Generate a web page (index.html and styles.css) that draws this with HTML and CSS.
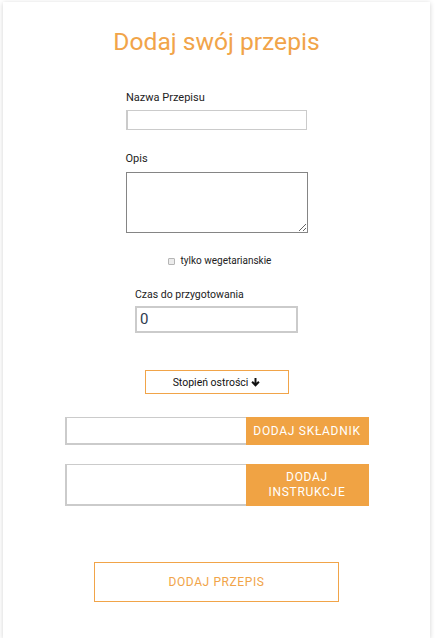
FILE: index.html
```html
<!DOCTYPE html>
<html lang="pl">
<head>
<meta charset="utf-8">
<link rel="stylesheet" href="styles.css">
</head>
<body>
<div class="card">
  <h1 class="title">Dodaj swój przepis</h1>
  <div class="group group-name">
    <label class="label">Nazwa Przepisu</label>
    <input class="text-input name-input" type="text">
  </div>
  <div class="group group-desc">
    <label class="label">Opis</label>
    <textarea class="desc"></textarea>
  </div>
  <label class="veg">
    <input class="check" type="checkbox">
    <span>tylko wegetarianskie</span>
  </label>
  <div class="group group-time">
    <label class="label label-time">Czas do przygotowania</label>
    <input class="num-input" type="text" value="0">
  </div>
  <button class="spicy">Stopień ostrości <svg class="arrow" width="9" height="10" viewBox="0 0 10 10"><path d="M5 0.5V8.5M1.2 4.8 5 8.6 8.8 4.8" stroke="#111" stroke-width="2.2" fill="none"/></svg></button>
  <div class="row row-ing">
    <input class="row-input" type="text">
    <button class="row-btn">DODAJ SKŁADNIK</button>
  </div>
  <div class="row row-ins">
    <input class="row-input" type="text">
    <button class="row-btn">DODAJ<br>INSTRUKCJE</button>
  </div>
  <button class="submit">DODAJ PRZEPIS</button>
</div>
</body>
</html>
```

FILE: styles.css
```css
* { box-sizing: border-box; }
html, body { margin: 0; padding: 0; background: #fff; }
body { font-family: Roboto, "Liberation Sans", sans-serif; }

.card {
  margin: 2px 0 0 3px;
  width: 427px;
  height: 636px;
  background: #fff;
  box-shadow: 0 1px 5px rgba(0,0,0,0.18);
  display: flex;
  flex-direction: column;
  align-items: center;
  padding-top: 24.5px;
}

.title {
  margin: 0;
  font-size: 24.6px;
  line-height: 30px;
  font-weight: 400;
  color: #f1a449;
}

.group { display: flex; flex-direction: column; }
.label {
  font-size: 11px;
  line-height: 13px;
  color: #222;
}
.group-name { margin-top: 34.5px; width: 181px; }
.name-input {
  margin-top: 6px;
  width: 181px;
  height: 20px;
  border: solid #cbcbcb;
  border-width: 1px 1px 1px 2px;
  outline: none;
}
.group-desc { margin-top: 22px; width: 182px; }
.desc {
  margin-top: 7px;
  width: 182px;
  height: 61px;
  border: 1px solid #858585;
  resize: both;
  font-family: inherit;
}

.veg {
  margin-top: 21.5px;
  margin-left: 6px;
  display: flex;
  align-items: center;
  font-size: 10px;
  line-height: 12px;
  color: #222;
}
.check {
  appearance: none;
  -webkit-appearance: none;
  margin: 1px 6px 0 0;
  width: 7px;
  height: 7px;
  border: 1px solid #b5b5b5;
  border-radius: 1px;
  background: #ececec;
}

.group-time { margin-top: 21px; width: 163px; }
.label-time { font-size: 10.5px; }
.num-input {
  margin-top: 5px;
  width: 163px;
  height: 27px;
  border: 2px solid #cbcbcb;
  padding: 0 0 0 3px;
  font-family: inherit;
  font-size: 15px;
  color: #2e3a4e;
  outline: none;
}

.spicy {
  margin-top: 37.5px;
  width: 144px;
  height: 24px;
  border: 1px solid #f1a449;
  background: #fff;
  font-family: inherit;
  font-size: 10.5px;
  color: #111;
  display: flex;
  align-items: center;
  justify-content: center;
  gap: 3px;
  padding: 0;
}
.arrow { display: block; }

.row { display: flex; width: 304px; }
.row-ing { margin-top: 23px; height: 28px; }
.row-ins { margin-top: 19px; height: 42px; }
.row-input {
  width: 181px;
  height: 100%;
  border: solid #cbcbcb;
  border-width: 1px 0 2px 2px;
  outline: none;
}
.row-btn {
  width: 123px;
  height: 100%;
  border: none;
  background: #f0a344;
  color: #fff;
  font-family: inherit;
  font-size: 12px;
  line-height: 15px;
  letter-spacing: 0.7px;
  padding: 0;
}

.submit {
  margin-top: 55.5px;
  width: 245px;
  height: 40px;
  border: 1px solid #f1a449;
  background: #fff;
  color: #f1a449;
  font-family: inherit;
  font-size: 12px;
  letter-spacing: 0.6px;
  padding: 0;
}
```
